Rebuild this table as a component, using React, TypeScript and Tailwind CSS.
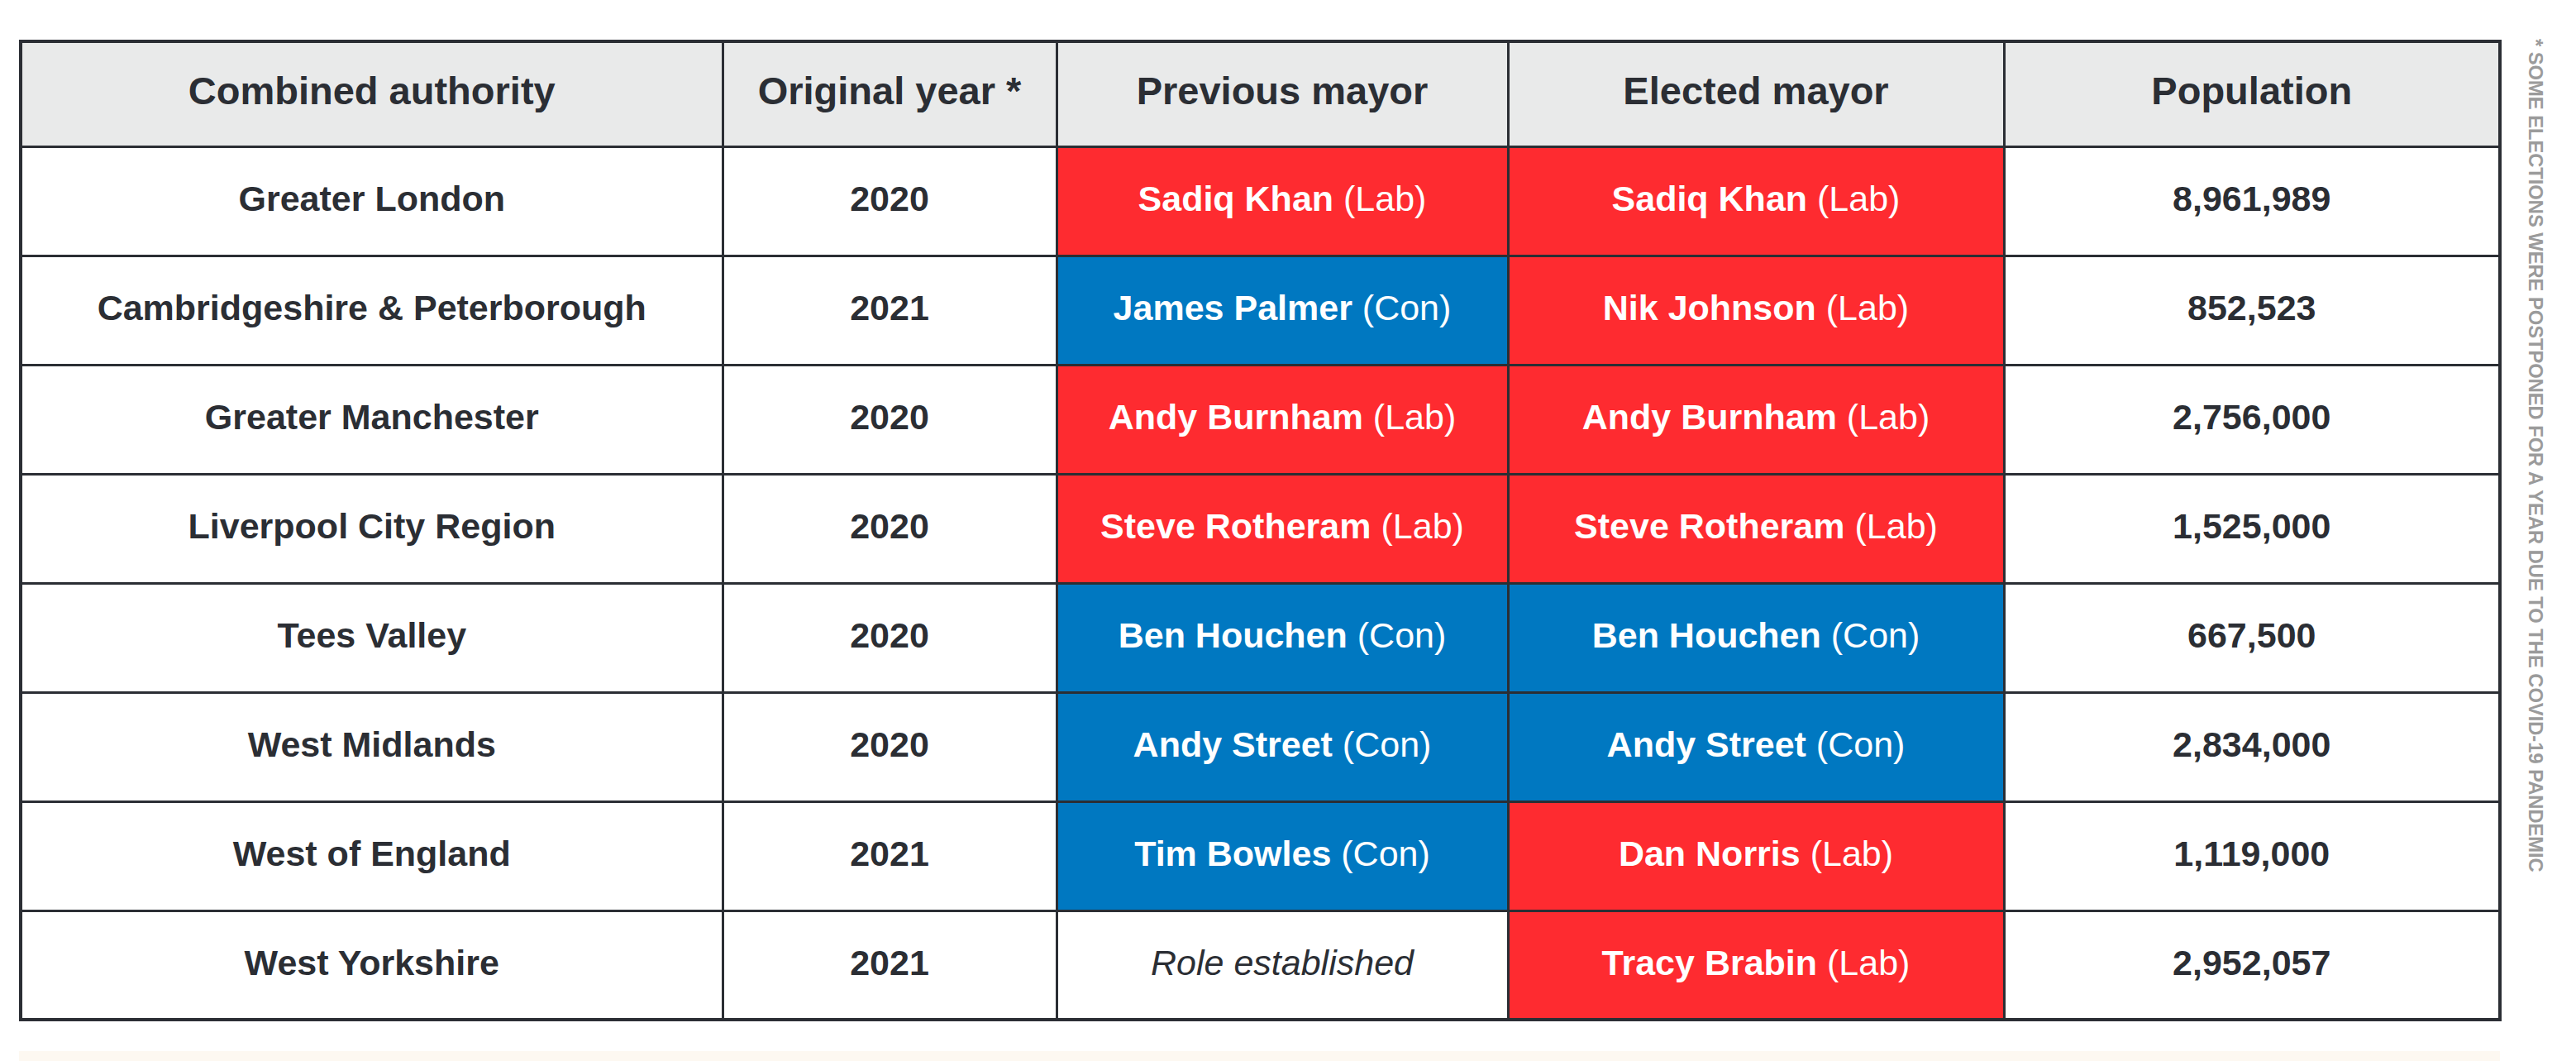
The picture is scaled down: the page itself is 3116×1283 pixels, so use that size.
import React from "react";

type Mayor = { name: string; party: "Lab" | "Con" } | null;

const rows: { area: string; year: string; prev: Mayor; elected: Mayor; pop: string }[] = [
  { area: "Greater London", year: "2020", prev: { name: "Sadiq Khan", party: "Lab" }, elected: { name: "Sadiq Khan", party: "Lab" }, pop: "8,961,989" },
  { area: "Cambridgeshire & Peterborough", year: "2021", prev: { name: "James Palmer", party: "Con" }, elected: { name: "Nik Johnson", party: "Lab" }, pop: "852,523" },
  { area: "Greater Manchester", year: "2020", prev: { name: "Andy Burnham", party: "Lab" }, elected: { name: "Andy Burnham", party: "Lab" }, pop: "2,756,000" },
  { area: "Liverpool City Region", year: "2020", prev: { name: "Steve Rotheram", party: "Lab" }, elected: { name: "Steve Rotheram", party: "Lab" }, pop: "1,525,000" },
  { area: "Tees Valley", year: "2020", prev: { name: "Ben Houchen", party: "Con" }, elected: { name: "Ben Houchen", party: "Con" }, pop: "667,500" },
  { area: "West Midlands", year: "2020", prev: { name: "Andy Street", party: "Con" }, elected: { name: "Andy Street", party: "Con" }, pop: "2,834,000" },
  { area: "West of England", year: "2021", prev: { name: "Tim Bowles", party: "Con" }, elected: { name: "Dan Norris", party: "Lab" }, pop: "1,119,000" },
  { area: "West Yorkshire", year: "2021", prev: null, elected: { name: "Tracy Brabin", party: "Lab" }, pop: "2,952,057" },
];

function MayorCell({ m }: { m: Mayor }) {
  if (!m) {
    return (
      <td className="border-[3px] border-[#2b2e34] bg-white pb-[5px] text-center align-middle italic font-normal text-[#2b2e34]">
        Role established
      </td>
    );
  }
  const bg = m.party === "Lab" ? "bg-[#fe2b30]" : "bg-[#0078c1]";
  return (
    <td className={`border-[3px] border-[#2b2e34] ${bg} pb-[5px] text-center align-middle text-white`}>
      <span className="font-bold">{m.name}</span>
      <span className="font-normal"> ({m.party})</span>
    </td>
  );
}

export default function App() {
  return (
    <div className="min-h-[1283px] w-[3116px] bg-white text-[#2b2e34] font-['Liberation_Sans',Arial,sans-serif] overflow-hidden">
      <div className="flex items-start pl-[23px]">
        <div className="flex flex-col">
          <table className="mt-[48px] table-fixed border-collapse border-4 border-[#2b2e34] text-[43px] leading-none">
            <colgroup>
              <col className="w-[849px]" />
              <col className="w-[404px]" />
              <col className="w-[546px]" />
              <col className="w-[600px]" />
              <col className="w-[600px]" />
            </colgroup>
            <thead>
              <tr className="h-[127px] bg-[#e9eaea]">
                {["Combined authority", "Original year *", "Previous mayor", "Elected mayor", "Population"].map((h) => (
                  <th key={h} className="border-[3px] border-[#2b2e34] pb-[8px] text-center align-middle font-bold text-[47px]">
                    {h}
                  </th>
                ))}
              </tr>
            </thead>
            <tbody>
              {rows.map((r) => (
                <tr key={r.area} className="h-[132px] bg-white">
                  <td className="border-[3px] border-[#2b2e34] pb-[5px] text-center align-middle font-bold">{r.area}</td>
                  <td className="border-[3px] border-[#2b2e34] pb-[5px] text-center align-middle font-bold">{r.year}</td>
                  <MayorCell m={r.prev} />
                  <MayorCell m={r.elected} />
                  <td className="border-[3px] border-[#2b2e34] pb-[5px] text-center align-middle font-bold">{r.pop}</td>
                </tr>
              ))}
            </tbody>
          </table>
          <div className="mt-[36px] h-[40px] w-[3001px] bg-[#fdf8f1]" />
        </div>
        <div className="mt-[47px] ml-[28px] [writing-mode:vertical-rl] text-[23.7px] leading-none font-bold uppercase text-[#9b9b9b] whitespace-nowrap">
          * Some elections were postponed for a year due to the COVID-19 pandemic
        </div>
      </div>
    </div>
  );
}
